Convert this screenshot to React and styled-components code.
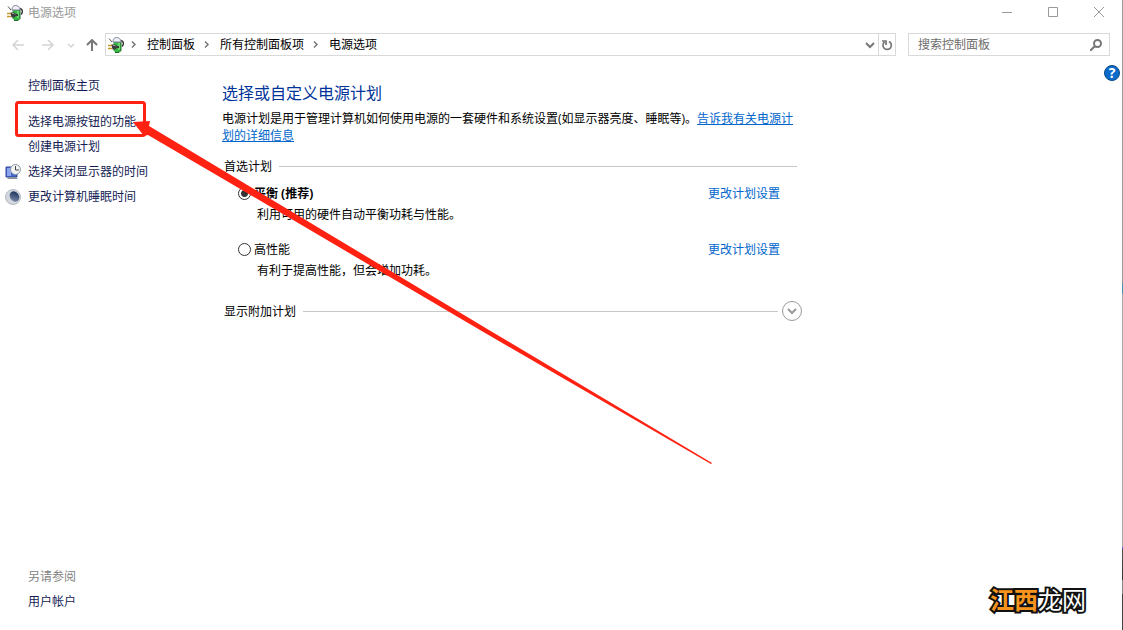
import React, { useState } from 'react'
import styled, { createGlobalStyle } from 'styled-components'

const GlobalStyle = createGlobalStyle`
  * {
    box-sizing: border-box;
  }
  body {
    margin: 0;
    background: #fff;
    color: #000;
    font: 12px/17px "Open Sans", "Noto Sans CJK SC", sans-serif;
  }
  h1, h2, p, ul, ol {
    margin: 0;
    padding: 0;
    font-weight: 400;
  }
  ul, ol {
    list-style: none;
  }
  button, input {
    margin: 0;
    font: inherit;
  }
  svg {
    display: block;
    flex: none;
  }
`

const Window = styled.div`
  position: relative;
  display: flex;
  min-height: 100vh;
  overflow: hidden;
`

const Content = styled.div`
  flex: 1;
  min-width: 0;
  display: flex;
  flex-direction: column;
`

const Edge = styled.div`
  width: 1px;
  background: linear-gradient(
    #999 283px, #4596b0 283px, #4596b0 294px, #aaa 294px,
    #aaa 547px, #6558c8 547px, #6558c8 549px, #555 549px,
    #333 580px, #888 580px, #888 594px, #444 594px
  );
`

const TitleBar = styled.header`
  display: flex;
  align-items: center;
  height: 25px;
  padding-left: 7px;
  gap: 5px;
`

const WindowTitle = styled.h1`
  flex: 1;
  font-size: 12px;
  color: #999;
`

const PlainButton = styled.button`
  display: flex;
  align-items: center;
  justify-content: center;
  padding: 0;
  border: 0;
  background: none;
`

const WindowButtons = styled.div`
  display: flex;
  height: 25px;
`

const WindowButton = styled(PlainButton)`
  width: 46px;
`

const Toolbar = styled.nav`
  display: flex;
  height: 40px;
  padding: 8px 12px 9px 3px;
`

const NavButton = styled(PlainButton)`
  width: ${props => props.$width}px;
`

const AddressBar = styled.div`
  flex: 1;
  display: flex;
  align-items: center;
  padding-left: 2px;
  margin-right: 12px;
  border: 1px solid #d9d9d9;
`

const Crumbs = styled.ol`
  flex: 1;
  display: flex;
  align-items: center;
`

const Crumb = styled.li`
  display: flex;
  align-items: center;

  svg {
    margin: 0 9px 0 7px;
  }
  &:first-child svg {
    margin-left: 5px;
  }
  a {
    color: #000;
    text-decoration: none;
  }
`

const AddressButton = styled(PlainButton)`
  width: 17px;
  height: 21px;
  ${props => props.$divided && 'border-left: 1px solid #d9d9d9;'}
`

const Search = styled.label`
  display: flex;
  align-items: center;
  width: 202px;
  padding: 0 7px 0 9px;
  border: 1px solid #d9d9d9;
`

const SearchInput = styled.input`
  flex: 1;
  min-width: 0;
  padding: 0;
  border: 0;
  outline: 0;
  background: none;

  &::placeholder {
    color: #6d6d6d;
    opacity: 1;
  }
`

const Body = styled.div`
  flex: 1;
  display: flex;
  padding-right: 2px;
`

const Sidebar = styled.aside`
  display: flex;
  flex-direction: column;
  justify-content: space-between;
  width: 222px;
  padding: 8px 0 16px;
`

const SideRow = styled.li`
  display: flex;
  align-items: center;
  height: 25px;
  padding-left: 5px;
  ${props => props.$home && 'margin-bottom: 11px;'}
`

const SideIcon = styled.span`
  width: 16px;
  margin-right: 7px;
`

const SideLink = styled.a`
  color: #151c55;
  text-decoration: none;
`

const SideLabel = styled.span`
  color: #838383;
`

const Main = styled.main`
  flex: 0 1 580px;
  padding-top: 16px;
`

const Spacer = styled.div`
  flex: 1;
`

const Heading = styled.h1`
  font-size: 16px;
  line-height: 24px;
  color: #003399;
`

const Intro = styled.p`
  margin: 5px 5px 12px 0;
`

const Link = styled.a`
  color: #0066cc;
  text-decoration: ${props => (props.$underline ? 'underline' : 'none')};
`

const Section = styled.div`
  display: flex;
  align-items: center;
  height: 20px;
  padding-left: 2px;
  margin: ${props => (props.$extra ? '6px 0 0' : '0 5px 7px 0')};
`

const SectionTitle = styled.h2`
  font-size: 12px;
`

const Rule = styled.div`
  flex: 1;
  height: 1px;
  margin-left: 7px;
  background: #c8c8c8;
`

const ExpandButton = styled(PlainButton)`
  width: 20px;
  height: 20px;
  margin-left: 4px;
  border: 1px solid #999;
  border-radius: 50%;
`

const Plan = styled.div`
  padding: 0 22px 14px 16px;
`

const PlanHead = styled.div`
  display: flex;
  align-items: center;
  justify-content: space-between;
  height: 20px;
`

const PlanName = styled.label`
  display: flex;
  align-items: center;
  gap: 3px;
  font-weight: ${props => (props.$bold ? 700 : 400)};
`

const Radio = styled.input`
  appearance: none;
  width: 13px;
  height: 13px;
  border: 1px solid #333;
  border-radius: 50%;
  background: #fff;

  &:checked {
    background: radial-gradient(#333 3px, #fff 4px);
  }
`

const PlanNote = styled.p`
  padding: 3px 0 2px 19px;
`

const HelpButton = styled(PlainButton)`
  width: 16px;
  height: 16px;
  border: 1px solid #0a4a86;
  border-radius: 50%;
  background: #0a6bcb;
  color: #fff;
  font-size: 14px;
  font-weight: 700;
  line-height: 14px;
`

const Annotation = styled.svg`
  position: absolute;
  top: 0;
  left: 0;
  pointer-events: none;
`

const Watermark = styled.div`
  position: absolute;
  right: 37px;
  bottom: 13px;
  font: 400 24px/36px "Noto Sans CJK SC", sans-serif;
  color: #fff;
  -webkit-text-stroke: 4px #111;
  paint-order: stroke fill;

  span {
    color: #f7941d;
    font-weight: 700;
  }
`

const PowerIcon = () => (
  <svg width="16" height="16" viewBox="0 0 16 16">
    <path d="M13 3.500c3 1 3 4 1 6" fill="none" stroke="#333" strokeWidth="1.400" />
    <path d="M5.500 5h7.500v8.500L11 15.500H7.500l-2-2z" fill="#35b544" />
    <path d="M13 5v8.500L11 15.500H7" fill="none" stroke="#1f6a2a" />
    <path d="M11 6v7" stroke="#86e07f" strokeWidth="1.500" />
    <path d="M5 5C5 .5 8 .5 9 .5s4 1 4 4.500z" fill="#eef0fa" stroke="#7d7f99" />
    <path d="M1 1.500L4 5" stroke="#555" />
    <path d="M0 8.500h4M0 11.500h4" stroke="#c59a28" strokeWidth="1.500" />
    <path d="M3.500 7.500h3.500l2 1.500h2v2H9l-2 1.500H4.500z" fill="#3a3a3a" />
    <path d="M5 8.500h2l1 1" fill="none" stroke="#999" />
  </svg>
)

const DisplayIcon = () => (
  <svg width="16" height="16" viewBox="0 0 16 16">
    <path d="M1 3h11v10H1z" fill="#4267cf" stroke="#34489a" />
    <path d="M2 4h4v8H2z" fill="#8ba5ee" />
    <path d="M2 15l2-2h7l2 2z" fill="#8b92a0" />
    <circle cx="10.500" cy="5.500" r="5" fill="#f1f3f5" stroke="#8b949c" />
    <path d="M10.500 2v4H14" fill="none" stroke="#444" />
  </svg>
)

const SleepIcon = () => (
  <svg width="16" height="16" viewBox="0 0 16 16">
    <defs>
      <linearGradient id="shade" x1="1" y1="0" x2="0" y2="1">
        <stop offset=".2" stopColor="#263a63" />
        <stop offset="1" stopColor="#8797b3" />
      </linearGradient>
    </defs>
    <circle cx="8" cy="8" r="7.500" fill="#d3d7de" stroke="#b3b8c1" />
    <ellipse cx="9.500" cy="7.500" rx="4.500" ry="5.500" transform="rotate(-35 9.500 7.500)" fill="url(#shade)" />
  </svg>
)

const Stroke = ({ size = 12, color = '#666', weight = 2, d }) => (
  <svg width={size} height={size} viewBox="0 0 12 12" fill="none" stroke={color} strokeWidth={weight}>
    <path d={d} />
  </svg>
)

const crumbs = ['控制面板', '所有控制面板项', '电源选项']

const tasks = [
  { text: '控制面板主页', home: true },
  { text: '选择电源按钮的功能' },
  { text: '创建电源计划' },
  { text: '选择关闭显示器的时间', icon: <DisplayIcon /> },
  { text: '更改计算机睡眠时间', icon: <SleepIcon /> },
]

const plans = [
  { id: 'balanced', name: '平衡 (推荐)', note: '利用可用的硬件自动平衡功耗与性能。' },
  { id: 'high', name: '高性能', note: '有利于提高性能，但会增加功耗。' },
]

const App = () => {
  const [active, setActive] = useState('balanced')

  return (
    <Window>
      <GlobalStyle />
      <Content>
        <TitleBar>
          <PowerIcon />
          <WindowTitle>电源选项</WindowTitle>
          <WindowButtons>
            <WindowButton aria-label="最小化"><Stroke color="#999" weight={1} d="M1 5.500h10" /></WindowButton>
            <WindowButton aria-label="最大化"><Stroke color="#999" weight={1} d="M1.500 .5h9v9h-9z" /></WindowButton>
            <WindowButton aria-label="关闭"><Stroke color="#999" weight={1} d="M1 0l10 10M11 0L1 10" /></WindowButton>
          </WindowButtons>
        </TitleBar>
        <Toolbar>
          <NavButton $width={30} aria-label="后退"><Stroke color="#d4d4d4" weight={1.5} d="M12 6H1M6 1L1 6l5 5" /></NavButton>
          <NavButton $width={30} aria-label="前进"><Stroke color="#d4d4d4" weight={1.5} d="M0 6h11M6 1l5 5-5 5" /></NavButton>
          <NavButton $width={16} aria-label="最近"><Stroke color="#d4d4d4" weight={1.5} d="M3 5l3 3 3-3" /></NavButton>
          <NavButton $width={26} aria-label="向上"><Stroke color="#777" d="M6 12V1M1 6l5-5 5 5" /></NavButton>
          <AddressBar>
            <PowerIcon />
            <Crumbs>
              {crumbs.map(name => (
                <Crumb key={name}>
                  <Stroke size={9} color="#777" d="M4 2l4 4-4 4" />
                  <a href="#crumb">{name}</a>
                </Crumb>
              ))}
            </Crumbs>
            <AddressButton aria-label="历史记录"><Stroke color="#777" d="M2 4l4 4 4-4" /></AddressButton>
            <AddressButton $divided aria-label="刷新">
              <Stroke color="#777" weight={1.7} d="M8 2.500A4.200 4.200 0 1 1 3.500 3M1 2h4v4" />
            </AddressButton>
          </AddressBar>
          <Search>
            <SearchInput type="text" placeholder="搜索控制面板" aria-label="搜索控制面板" />
            <Stroke color="#777" d="M0 12l5-5M7.500 1a3.500 3.500 0 1 1 0 7 3.500 3.500 0 0 1 0-7z" />
          </Search>
        </Toolbar>
        <Body>
          <Sidebar>
            <ul>
              {tasks.map(task => (
                <SideRow key={task.text} $home={task.home}>
                  <SideIcon>{task.icon}</SideIcon>
                  <SideLink href="#task">{task.text}</SideLink>
                </SideRow>
              ))}
            </ul>
            <ul>
              <SideRow>
                <SideIcon />
                <SideLabel>另请参阅</SideLabel>
              </SideRow>
              <SideRow>
                <SideIcon />
                <SideLink href="#accounts">用户帐户</SideLink>
              </SideRow>
            </ul>
          </Sidebar>
          <Main>
            <Heading>选择或自定义电源计划</Heading>
            <Intro>
              电源计划是用于管理计算机如何使用电源的一套硬件和系统设置(如显示器亮度、睡眠等)。
              <Link $underline href="#more">告诉我有关电源计划的详细信息</Link>
            </Intro>
            <Section>
              <SectionTitle>首选计划</SectionTitle>
              <Rule />
            </Section>
            {plans.map(plan => (
              <Plan key={plan.id}>
                <PlanHead>
                  <PlanName $bold={active === plan.id}>
                    <Radio
                      type="radio"
                      name="plan"
                      checked={active === plan.id}
                      onChange={() => setActive(plan.id)}
                    />
                    {plan.name}
                  </PlanName>
                  <Link href="#settings">更改计划设置</Link>
                </PlanHead>
                <PlanNote>{plan.note}</PlanNote>
              </Plan>
            ))}
            <Section $extra>
              <SectionTitle>显示附加计划</SectionTitle>
              <Rule />
              <ExpandButton aria-label="展开"><Stroke color="#999" d="M2 4l4 4 4-4" /></ExpandButton>
            </Section>
          </Main>
          <Spacer />
          <HelpButton aria-label="帮助">?</HelpButton>
        </Body>
      </Content>
      <Edge />
      <Annotation width="720" height="470" viewBox="0 0 720 470">
        <rect x="16.500" y="102.500" width="128" height="33" rx="2" fill="none" stroke="#ff2212" strokeWidth="3" />
        <path d="M133 122l17-1-1 5 90 54 250 150 223 133-1 1-231-134-255-150-77-45-4 1z" fill="#ff2212" />
      </Annotation>
      <Watermark><span>江西</span>龙网</Watermark>
    </Window>
  )
}

export default App
